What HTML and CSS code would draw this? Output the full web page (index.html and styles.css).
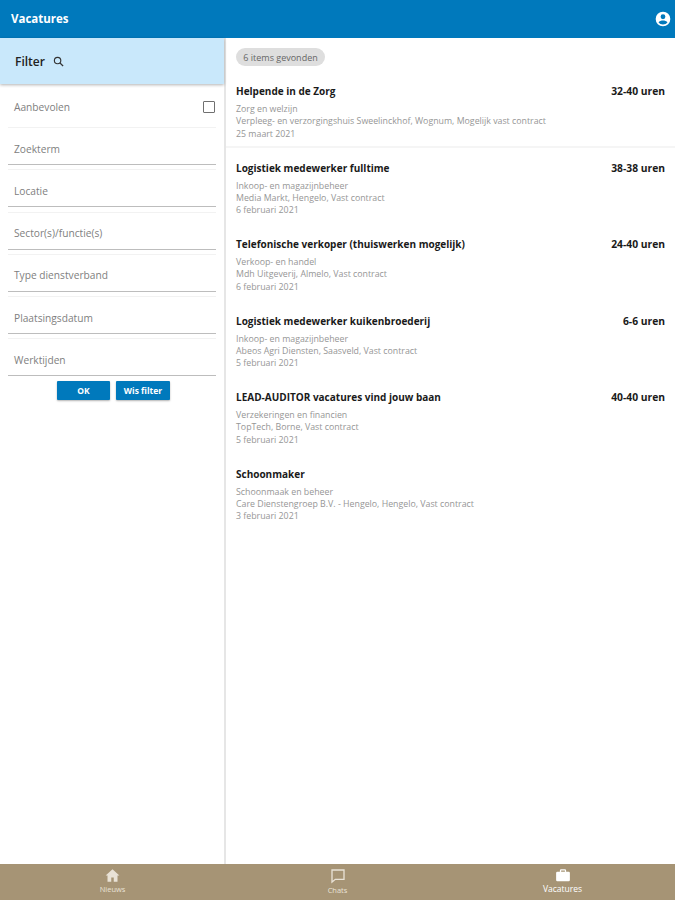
FILE: index.html
```html
<!DOCTYPE html>
<html lang="en">
<head>
    <meta charset="UTF-8">
    <meta name="viewport" content="width=device-width, initial-scale=1.0">
    <title>Vacatures</title>
    <link rel="stylesheet" href="styles.css">
</head>
<body>
    <header class="top-bar">
        <span class="top-title">Vacatures</span>
        <svg class="account-icon" viewBox="0 0 24 24" width="16" height="16">
            <path fill="#fff" d="M12 1a11 11 0 1 0 0 22 11 11 0 0 0 0-22zm0 4a3.600 3.600 0 1 1 0 7.200A3.600 3.600 0 0 1 12 5zm0 15.400c-2.800 0-5.200-1.300-6.700-3.400 1-1.800 4.400-2.800 6.700-2.800s5.700 1 6.700 2.800c-1.500 2.100-3.900 3.400-6.700 3.400z"/>
        </svg>
    </header>

    <div class="main">
        <aside class="sidebar">
            <div class="filter-head">
                <span>Filter</span>
                <svg viewBox="0 0 24 24" width="11" height="11">
                    <circle cx="10" cy="10" r="7" fill="none" stroke="#333" stroke-width="2.500"/>
                    <path d="M15 15l7 7" stroke="#333" stroke-width="3"/>
                </svg>
            </div>
            <div class="filter-fields">
                <div class="field field-check">
                    <span>Aanbevolen</span>
                    <span class="checkbox"></span>
                </div>
                <div class="field"><span>Zoekterm</span></div>
                <div class="field"><span>Locatie</span></div>
                <div class="field"><span>Sector(s)/functie(s)</span></div>
                <div class="field"><span>Type dienstverband</span></div>
                <div class="field"><span>Plaatsingsdatum</span></div>
                <div class="field"><span>Werktijden</span></div>
            </div>
            <div class="filter-buttons">
                <button class="btn btn-ok">OK</button>
                <button class="btn btn-clear">Wis filter</button>
            </div>
        </aside>

        <main class="results">
            <div class="chip">6 items gevonden</div>

            <div class="job job-line">
                <div class="job-head"><span>Helpende in de Zorg</span><span class="job-hours">32-40 uren</span></div>
                <div class="job-info">Zorg en welzijn</div>
                <div class="job-info">Verpleeg- en verzorgingshuis Sweelinckhof, Wognum, Mogelijk vast contract</div>
                <div class="job-info">25 maart 2021</div>
            </div>
            <div class="job">
                <div class="job-head"><span>Logistiek medewerker fulltime</span><span class="job-hours">38-38 uren</span></div>
                <div class="job-info">Inkoop- en magazijnbeheer</div>
                <div class="job-info">Media Markt, Hengelo, Vast contract</div>
                <div class="job-info">6 februari 2021</div>
            </div>
            <div class="job">
                <div class="job-head"><span>Telefonische verkoper (thuiswerken mogelijk)</span><span class="job-hours">24-40 uren</span></div>
                <div class="job-info">Verkoop- en handel</div>
                <div class="job-info">Mdh Uitgeverij, Almelo, Vast contract</div>
                <div class="job-info">6 februari 2021</div>
            </div>
            <div class="job">
                <div class="job-head"><span>Logistiek medewerker kuikenbroederij</span><span class="job-hours">6-6 uren</span></div>
                <div class="job-info">Inkoop- en magazijnbeheer</div>
                <div class="job-info">Abeos Agri Diensten, Saasveld, Vast contract</div>
                <div class="job-info">5 februari 2021</div>
            </div>
            <div class="job">
                <div class="job-head"><span>LEAD-AUDITOR vacatures vind jouw baan</span><span class="job-hours">40-40 uren</span></div>
                <div class="job-info">Verzekeringen en financien</div>
                <div class="job-info">TopTech, Borne, Vast contract</div>
                <div class="job-info">5 februari 2021</div>
            </div>
            <div class="job">
                <div class="job-head"><span>Schoonmaker</span></div>
                <div class="job-info">Schoonmaak en beheer</div>
                <div class="job-info">Care Dienstengroep B.V. - Hengelo, Hengelo, Vast contract</div>
                <div class="job-info">3 februari 2021</div>
            </div>
        </main>
    </div>

    <nav class="bottom-bar">
        <div class="tab">
            <svg viewBox="0 0 24 24" width="15" height="15">
                <path fill="#e9e2d6" d="M12 2L1 12h3v10h6v-7h4v7h6V12h3z"/>
            </svg>
            <span>Nieuws</span>
        </div>
        <div class="tab">
            <svg viewBox="0 0 24 24" width="16" height="16">
                <path fill="none" stroke="#e9e2d6" stroke-width="2" d="M3 3h18v14H8l-5 4z"/>
            </svg>
            <span>Chats</span>
        </div>
        <div class="tab tab-active">
            <svg viewBox="0 0 24 24" width="16" height="15">
                <path fill="#fff" d="M9 2h6a2 2 0 0 1 2 2v2h4a2 2 0 0 1 2 2v11a2 2 0 0 1-2 2H3a2 2 0 0 1-2-2V8a2 2 0 0 1 2-2h4V4a2 2 0 0 1 2-2zm0 2v2h6V4z"/>
            </svg>
            <span>Vacatures</span>
        </div>
    </nav>
</body>
</html>
```

FILE: styles.css
```css
* {
    box-sizing: border-box;
}

body {
    display: flex;
    flex-direction: column;
    height: 100vh;
    margin: 0;
    overflow: hidden;
    font-family: "Open Sans", "Noto Sans", sans-serif;
    background-color: #ffffff;
}

.top-bar {
    display: flex;
    justify-content: space-between;
    align-items: center;
    flex: 0 0 38px;
    padding: 0 4px 1px 11px;
    background-color: #0079bc;
    color: #ffffff;
}

.top-title {
    font-size: 11.500px;
    font-weight: 700;
}

.main {
    display: flex;
    flex: 1;
    min-height: 0;
}

.sidebar {
    flex: 0 0 226px;
    border-right: 2px solid #e6e6e6;
}

.filter-head {
    display: flex;
    align-items: center;
    gap: 8px;
    height: 46px;
    padding-left: 15px;
    background-color: #c9e8fb;
    box-shadow: 0 1px 3px rgba(0, 0, 0, 0.3);
    color: #222222;
    font-size: 12px;
    font-weight: 600;
}

.filter-fields {
    padding: 0 8px;
}

/* light line on top, grey underline below, small gap to the next field */
.field {
    display: flex;
    align-items: center;
    height: 38px;
    margin-bottom: 4.300px;
    padding: 5px 1px 0 6px;
    border-top: 1px solid #f2f2f2;
    border-bottom: 1.500px solid #bdbdbd;
    color: #808080;
    font-size: 10.200px;
}

.field-check {
    justify-content: space-between;
    height: 43px;
    margin-bottom: 0;
    padding-top: 3px;
    border: none;
}

.checkbox {
    width: 12px;
    height: 12px;
    border: 1.500px solid #707070;
    border-radius: 1px;
}

.filter-buttons {
    display: flex;
    justify-content: center;
    gap: 6px;
    margin-top: 1px;
    padding-left: 3px;
}

.btn {
    height: 19px;
    padding: 0;
    border: none;
    border-radius: 1px;
    background-color: #0079bc;
    box-shadow: 0 1px 2px rgba(0, 0, 0, 0.3);
    color: #ffffff;
    font-family: inherit;
    font-size: 8.500px;
    font-weight: 700;
}

.btn-ok {
    width: 53px;
}

.btn-clear {
    width: 54px;
}

.results {
    flex: 1;
    padding: 10px 10px 0 10px;
}

.chip {
    display: flex;
    align-items: center;
    justify-content: center;
    width: 89px;
    height: 18px;
    margin-bottom: 17px;
    border-radius: 9px;
    background-color: #dedede;
    color: #666666;
    font-size: 9px;
}

.job {
    height: 65px;
    margin: 0 -10px 11.500px;
    padding: 0 10px;
}

.job-line {
    border-bottom: 2px solid #f5f5f5;
}

.job-head {
    display: flex;
    justify-content: space-between;
    height: 20px;
    color: #1a1a1a;
    font-size: 10px;
    font-weight: 700;
    line-height: 16px;
}

.job-hours {
    font-size: 10.300px;
}

.job-info {
    color: #969696;
    font-size: 8.800px;
    line-height: 12.300px;
}

.bottom-bar {
    display: grid;
    grid-template-columns: repeat(3, 1fr);
    flex: 0 0 36px;
    background-color: #a69475;
}

.tab {
    display: flex;
    flex-direction: column;
    align-items: center;
    padding-top: 4px;
    color: #e9e2d6;
    font-size: 7.500px;
    line-height: 12px;
}

.tab-active {
    color: #ffffff;
    font-size: 8.500px;
}
```
